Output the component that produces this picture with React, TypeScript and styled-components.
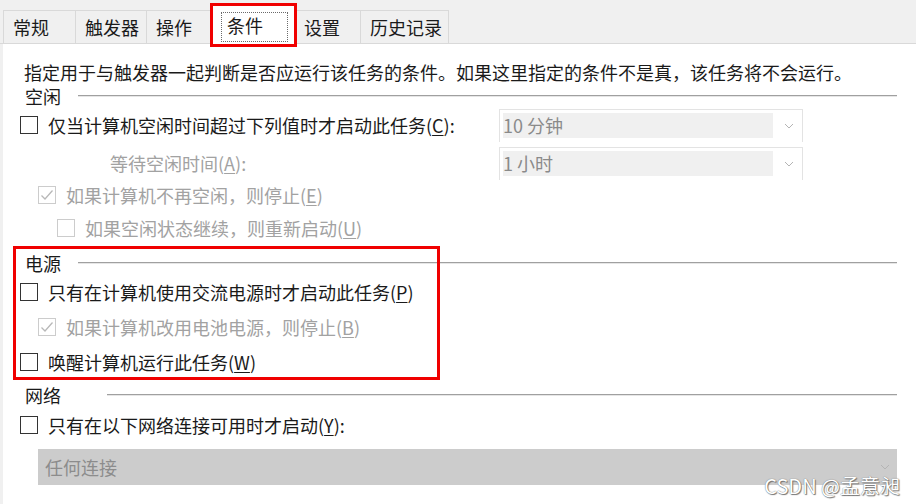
import styled, { createGlobalStyle } from 'styled-components'

const GlobalStyle = createGlobalStyle`
  html, body {
    margin: 0;
    padding: 0;
    background: #f0f0f0;
  }
  body {
    font-family: 'Noto Sans CJK SC', 'Noto Sans', sans-serif;
  }
`

const tabs = [
  {label: '常规', width: 73},
  {label: '触发器', width: 72},
  {label: '操作', width: 65},
  {label: '条件', width: 85, selected: true},
  {label: '设置', width: 67},
  {label: '历史记录', width: 89},
]

const Chevron = () => (
  <svg width="10" height="6" viewBox="0 0 10 6">
    <polyline points="1,1 5,5 9,1" fill="none" stroke="#b4b4b4" strokeWidth="1" />
  </svg>
)

const CheckBox = ({checked, disabled}: {checked?: boolean; disabled?: boolean}) => (
  <Box $disabled={disabled}>
    {checked && (
      <svg width="16" height="16" viewBox="0 0 16 16">
        <polyline points="2.5,8.5 6,12 13.5,3.5" fill="none" stroke={disabled ? '#b8b8b8' : '#222'} strokeWidth="1.3" />
      </svg>
    )}
  </Box>
)

const Option = ({text, hotkey, tail = '', indent = 0, h = 34, checked, disabled}: {
  text: string
  hotkey: string
  tail?: string
  indent?: number
  h?: number
  checked?: boolean
  disabled?: boolean
}) => (
  <CheckRow $indent={indent} $h={h}>
    <CheckBox checked={checked} disabled={disabled} />
    <Label $disabled={disabled}>
      {text}(<Key>{hotkey}</Key>){tail}
    </Label>
  </CheckRow>
)

const App = () => {
  return (
    <Window>
      <GlobalStyle />
      <TabBar>
        {tabs.map((t) =>
          t.selected ? (
            <SelectedTab key={t.label} $w={t.width}>
              <FocusRing>{t.label}</FocusRing>
            </SelectedTab>
          ) : (
            <Tab key={t.label} $w={t.width}>{t.label}</Tab>
          )
        )}
      </TabBar>

      <Panel>
        <Description>
          指定用于与触发器一起判断是否应运行该任务的条件。如果这里指定的条件不是真，该任务将不会运行。
        </Description>

        <SectionHeader $labelWidth={58}>
          <span>空闲</span>
          <Rule />
        </SectionHeader>
        <IdleRow $h={34}>
          <Option text="仅当计算机空闲时间超过下列值时才启动此任务" hotkey="C" tail=":" />
          <Select>
            <Field>10 分钟</Field>
            <Chevron />
          </Select>
        </IdleRow>
        <IdleRow $h={34} $mt={4}>
          <WaitLabel $disabled>
            等待空闲时间(<Key>A</Key>):
          </WaitLabel>
          <Select>
            <Field>1 小时</Field>
            <Chevron />
          </Select>
        </IdleRow>
        <Option text="如果计算机不再空闲，则停止" hotkey="E" indent={18} h={29} checked disabled />
        <Option text="如果空闲状态继续，则重新启动" hotkey="U" indent={37} h={38} disabled />

        <SectionHeader $labelWidth={58} $mt={4}>
          <span>电源</span>
          <Rule />
        </SectionHeader>
        <Option text="只有在计算机使用交流电源时才启动此任务" hotkey="P" h={34} />
        <Option text="如果计算机改用电池电源，则停止" hotkey="B" indent={18} h={35} checked disabled />
        <Option text="唤醒计算机运行此任务" hotkey="W" h={36} />

        <SectionHeader $labelWidth={87} $mt={3}>
          <span>网络</span>
          <Rule />
        </SectionHeader>
        <Option text="只有在以下网络连接可用时才启动" hotkey="Y" tail=":" h={36} />
        <NetSelect>
          <span>任何连接</span>
          <Chevron />
        </NetSelect>
      </Panel>

      <Annotation $x={210} $y={3} $w={87} $h={44} />
      <Annotation $x={13} $y={246} $w={427} $h={134} />
      <Watermark>CSDN @孟意昶</Watermark>
    </Window>
  )
}

export default App

const Window = styled.div`
  position: relative;
  width: 916px;
  height: 504px;
  overflow: hidden;
  display: flex;
  flex-direction: column;
  background: #f0f0f0;
  color: #1a1a1a;
`

const TabBar = styled.div`
  display: flex;
  align-items: flex-end;
  height: 44px;
  box-sizing: border-box;
  padding-left: 3px;
  border-bottom: 1px solid #d9d9d9;
`

const Tab = styled.div<{ $w: number }>`
  width: ${(p) => p.$w}px;
  height: 33px;
  box-sizing: border-box;
  margin-right: -1px;
  padding: 2px 0 0 9px;
  border: 1px solid #d9d9d9;
  border-bottom: none;
  font-size: 18px;
  line-height: 29px;
  white-space: nowrap;
`

const SelectedTab = styled.div<{ $w: number }>`
  width: ${(p) => p.$w}px;
  height: 41px;
  box-sizing: border-box;
  margin: 0 -1px -1px 0;
  padding: 9px 0 0 11px;
  background: #fff;
  position: relative;
`

const FocusRing = styled.div`
  width: 67px;
  height: 30px;
  box-sizing: border-box;
  border: 1px dotted #6a6a6a;
  padding-left: 5px;
  font-size: 18px;
  line-height: 24px;
`

const Panel = styled.div`
  flex: 1;
  display: flex;
  flex-direction: column;
  margin-left: 3px;
  padding: 16px 19px 0 17px;
  background: #fff;
`

const Description = styled.div`
  padding-left: 4px;
  font-size: 18px;
  line-height: 24px;
  white-space: nowrap;
`

const SectionHeader = styled.div<{ $labelWidth: number; $mt?: number }>`
  display: flex;
  align-items: center;
  height: 24px;
  margin-top: ${(p) => p.$mt || 0}px;
  font-size: 18px;
  line-height: 24px;

  span {
    width: ${(p) => p.$labelWidth}px;
    box-sizing: border-box;
    padding-left: 5px;
    flex-shrink: 0;
  }
`

const Rule = styled.div`
  flex: 1;
  height: 1px;
  background: #a0a0a0;
  border-bottom: 1px solid #e6e6e6;
`

const IdleRow = styled.div<{ $h: number; $mt?: number }>`
  display: grid;
  grid-template-columns: 479px 304px;
  align-items: center;
  height: ${(p) => p.$h}px;
  margin-top: ${(p) => p.$mt || 0}px;
`

const CheckRow = styled.div<{ $indent: number; $h: number }>`
  display: flex;
  align-items: center;
  gap: 10px;
  height: ${(p) => p.$h}px;
  padding-left: ${(p) => p.$indent}px;
`

const Box = styled.div<{ $disabled?: boolean }>`
  width: 18px;
  height: 18px;
  box-sizing: border-box;
  flex-shrink: 0;
  display: flex;
  align-items: center;
  justify-content: center;
  border: 1px solid ${(p) => (p.$disabled ? '#cccccc' : '#333333')};
  background: #fff;
`

const Label = styled.span<{ $disabled?: boolean }>`
  font-size: 18px;
  line-height: 24px;
  white-space: nowrap;
  color: ${(p) => (p.$disabled ? '#a2a2a2' : '#1a1a1a')};
`

const WaitLabel = styled(Label)`
  padding-left: 90px;
`

const Key = styled.span`
  text-decoration: underline;
  text-underline-offset: 2px;
  text-decoration-thickness: 1px;
`

const Select = styled.div`
  height: 33px;
  box-sizing: border-box;
  display: flex;
  align-items: center;
  padding-left: 3px;
  border: 1px solid #e3e3e3;
  border-bottom: none;
`

const Field = styled.div`
  width: 270px;
  height: 25px;
  margin-right: 11px;
  background: #f0f0f0;
  color: #8a8a8a;
  font-size: 18px;
  line-height: 25px;
`

const NetSelect = styled.div`
  display: flex;
  align-items: center;
  height: 36px;
  margin: 6px 0 0 18px;
  padding: 0 7px 0 7px;
  background: #cccccc;
  color: #8c8c8c;
  font-size: 18px;
  line-height: 24px;

  span {
    flex: 1;
  }
`

const Annotation = styled.div<{ $x: number; $y: number; $w: number; $h: number }>`
  position: absolute;
  left: ${(p) => p.$x}px;
  top: ${(p) => p.$y}px;
  width: ${(p) => p.$w}px;
  height: ${(p) => p.$h}px;
  box-sizing: border-box;
  border: 3px solid #f00000;
  pointer-events: none;
`

const Watermark = styled.div`
  position: absolute;
  right: 16px;
  bottom: 8px;
  font-family: 'Noto Sans CJK SC', sans-serif;
  font-size: 20px;
  line-height: 20px;
  color: #fff;
  text-shadow: 0 0 1px #555, 1px 1px 1px #777;
`
